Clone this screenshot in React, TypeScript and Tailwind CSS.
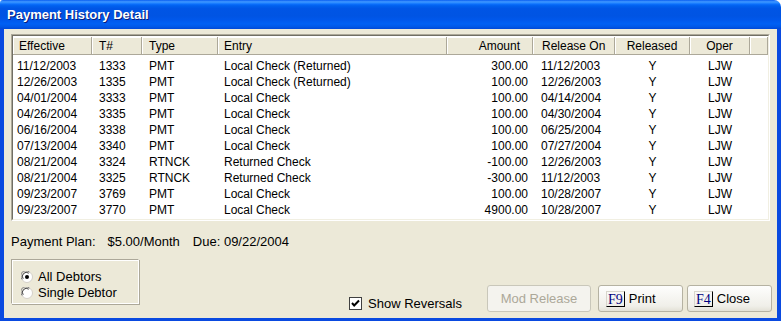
import React from "react";

const rows = [
  ["11/12/2003", "1333", "PMT", "Local Check (Returned)", "300.00", "11/12/2003", "Y", "LJW"],
  ["12/26/2003", "1335", "PMT", "Local Check (Returned)", "100.00", "12/26/2003", "Y", "LJW"],
  ["04/01/2004", "3333", "PMT", "Local Check", "100.00", "04/14/2004", "Y", "LJW"],
  ["04/26/2004", "3335", "PMT", "Local Check", "100.00", "04/30/2004", "Y", "LJW"],
  ["06/16/2004", "3338", "PMT", "Local Check", "100.00", "06/25/2004", "Y", "LJW"],
  ["07/13/2004", "3340", "PMT", "Local Check", "100.00", "07/27/2004", "Y", "LJW"],
  ["08/21/2004", "3324", "RTNCK", "Returned Check", "-100.00", "12/26/2003", "Y", "LJW"],
  ["08/21/2004", "3325", "RTNCK", "Returned Check", "-300.00", "11/12/2003", "Y", "LJW"],
  ["09/23/2007", "3769", "PMT", "Local Check", "100.00", "10/28/2007", "Y", "LJW"],
  ["09/23/2007", "3770", "PMT", "Local Check", "4900.00", "10/28/2007", "Y", "LJW"],
];

// column widths / alignment for body cells
const cellCls = [
  "w-[79px] pl-[4px]",
  "w-[50px] pl-[7px]",
  "w-[76px] pl-[7px]",
  "w-[229px] pl-[6px]",
  "w-[86px] pr-[5px] text-right",
  "w-[82px] pl-[8px]",
  "w-[75px] text-center",
  "w-[60px] text-center",
];

const headers = [
  { label: "Effective", cls: "w-[79px] pl-[6px]" },
  { label: "T#", cls: "w-[50px] pl-[7px]" },
  { label: "Type", cls: "w-[76px] pl-[7px]" },
  { label: "Entry", cls: "w-[229px] pl-[6px]" },
  { label: "Amount", cls: "w-[86px] pr-[12px] text-right" },
  { label: "Release On", cls: "w-[82px] pl-[9px]" },
  { label: "Released", cls: "w-[75px] text-center" },
  { label: "Oper", cls: "w-[60px] text-center" },
  { label: "", cls: "flex-1" },
];

const Radio = ({ checked }: { checked?: boolean }) => (
  <svg width="12" height="12" viewBox="0 0 12 12" className="shrink-0">
    <circle cx="6" cy="6" r="5.5" fill="#fff" stroke="#d4d0c8" />
    <path d="M1.2 8.5 A5 5 0 0 1 8.5 1.2" fill="none" stroke="#808080" strokeWidth="1" />
    <path d="M2.2 7.8 A4 4 0 0 1 7.8 2.2" fill="none" stroke="#404040" strokeWidth="1" />
    {checked && <circle cx="6" cy="6" r="2" fill="#000" />}
  </svg>
);

const FKey = ({ k }: { k: string }) => (
  <span className="inline-block h-[16px] leading-[15px] px-[1px] border-t border-l border-[#d8d6cc] border-r border-b border-r-black border-b-black font-['Liberation_Serif',serif] text-[14px] text-[#000080]">
    {k}
  </span>
);

export default function App() {
  return (
    <div className="w-[781px] h-[321px] bg-white font-['Liberation_Sans',Arial,sans-serif] text-black">
      <div className="w-full h-full flex flex-col rounded-tr-[7px] rounded-tl-[3px] overflow-hidden">
        {/* Title bar */}
        <div className="h-[29px] shrink-0 flex items-center pl-[7px] pt-[1px] bg-[linear-gradient(180deg,#0a5ef0_0%,#3d95ff_6%,#2a8bff_10%,#0b6ffc_14%,#0060ee_20%,#0055e5_30%,#0054e3_55%,#0058ec_70%,#0060f4_82%,#0058e8_92%,#0048d8_100%)]">
          <span className="text-white font-bold text-[13px] [text-shadow:1px_1px_0_#0a1e7a]">
            Payment History Detail
          </span>
        </div>

        {/* Client area */}
        <div className="flex-1 flex flex-col bg-[#ECE9D8] border-l-4 border-r-4 border-b-[3px] border-[#0a4ae0] px-[7px] pt-[5px]">
          {/* Grid */}
          <div className="h-[187px] border border-t-[#ACA899] border-l-[#ACA899] border-r-white border-b-white">
            <div className="h-full flex flex-col bg-white border border-t-[#716F64] border-l-[#716F64] border-r-[#F1EFE2] border-b-[#F1EFE2] pt-[1px]">
              <div className="flex h-[18px] shrink-0 text-[12px] leading-[18px] bg-[#ECE9D8]">
                {headers.map((h, i) => (
                  <div
                    key={i}
                    className={`${h.cls} border-r border-b border-[#ACA899] shadow-[inset_1px_1px_0_#fff] whitespace-nowrap`}
                  >
                    {h.label}
                  </div>
                ))}
              </div>
              <div className="pt-[3px] text-[12px]">
                {rows.map((r, i) => (
                  <div key={i} className="flex h-[16px] leading-[16px] whitespace-nowrap">
                    {r.map((c, j) => (
                      <div key={j} className={cellCls[j]}>
                        {c}
                      </div>
                    ))}
                  </div>
                ))}
              </div>
            </div>
          </div>

          {/* Payment plan */}
          <div className="mt-[13px] h-[15px] leading-[15px] text-[13px] whitespace-nowrap flex">
            <span>Payment Plan:</span>
            <span className="ml-[12px]">$5.00/Month</span>
            <span className="ml-[13px]">Due: 09/22/2004</span>
          </div>

          {/* Bottom row */}
          <div className="flex text-[13px]">
            <div className="mt-[10px] w-[128px] h-[45px] border border-t-[#ACA899] border-l-[#ACA899] border-r-white border-b-white shadow-[inset_1px_1px_0_#fff,1px_1px_0_#ACA899] flex flex-col pt-[9px] pl-[9px]">
              <div className="flex items-center gap-[5px] h-[16px]">
                <Radio checked />
                <span>All Debtors</span>
              </div>
              <div className="flex items-center gap-[5px] h-[16px]">
                <Radio />
                <span>Single Debtor</span>
              </div>
            </div>

            <div className="ml-auto -mr-[2px] mt-[36px] flex items-start">
              <div className="flex items-center mt-[11px] mr-[25px]">
                <svg width="13" height="13" viewBox="0 0 13 13" className="shrink-0">
                  <rect x="0.5" y="0.5" width="12" height="12" fill="#fff" stroke="#404040" />
                  <path d="M3 6 L5.2 8.5 L10 3.5" fill="none" stroke="#000" strokeWidth="2" />
                </svg>
                <span className="ml-[6px] leading-[15px]">Show Reversals</span>
              </div>
              <button className="w-[104px] h-[27px] rounded-[3px] border border-[#C9C7BA] bg-[#F4F3EE] text-[#ACA899] text-[13px]">
                Mod Release
              </button>
              <button className="ml-[7px] w-[85px] h-[27px] rounded-[3px] border border-[#B5B2A2] bg-[linear-gradient(180deg,#fefefd,#f0efe9_80%,#e3e1d6)] flex items-center pl-[7px] gap-[4px] text-[13px]">
                <FKey k="F9" />
                <span>Print</span>
              </button>
              <button className="ml-[4px] w-[85px] h-[27px] rounded-[3px] border border-[#B5B2A2] bg-[linear-gradient(180deg,#fefefd,#f0efe9_80%,#e3e1d6)] flex items-center pl-[6px] gap-[4px] text-[13px]">
                <FKey k="F4" />
                <span>Close</span>
              </button>
            </div>
          </div>
        </div>
      </div>
    </div>
  );
}
